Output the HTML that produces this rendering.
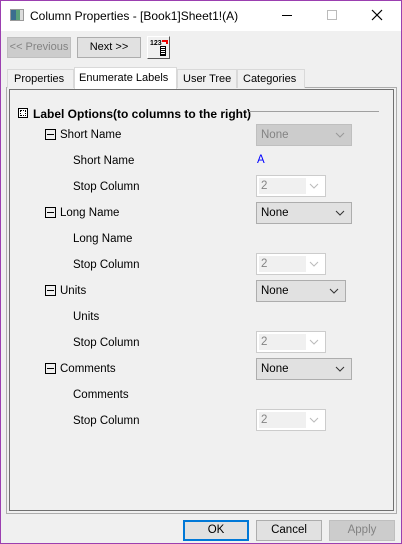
<!DOCTYPE html>
<html><head><style>
*{box-sizing:border-box;margin:0;padding:0}
body{width:402px;height:544px;overflow:hidden;background:#f0f0f0;font-family:"Liberation Sans",sans-serif;font-size:11.5px;color:#000;position:relative}
.a{position:absolute;white-space:nowrap}
.t{margin-top:2px}
.win{position:absolute;left:0;top:0;width:402px;height:544px;border:1px solid #9b3fb0;pointer-events:none}
.btn{position:absolute;white-space:nowrap;background:#e1e1e1;border:1px solid #adadad;text-align:center;line-height:19px}
.tab{position:absolute;white-space:nowrap;top:69px;height:19px;border:1px solid #d9d9d9;border-bottom:none;background:#f0f0f0;line-height:18px;padding-left:6px;font-size:11px}
.box{position:absolute;width:11px;height:11px;border:1px solid #000}
.box:after{content:"";position:absolute;left:1px;top:4px;width:7px;height:1px;background:#000}
.cb{position:absolute;white-space:nowrap;height:22px;line-height:21px;padding-left:4px}
.chev{position:absolute;right:6px;top:5px;width:10px;height:10px}
</style></head><body>
<div class="a" style="left:0;top:0;width:402px;height:31px;background:#fff"></div>
<div class="a" style="left:10px;top:9px;width:14px;height:12px;border:1px solid #999;background:linear-gradient(90deg,#3b6e8f 0 5px,#5aa07a 5px 9px,#ddd 9px)"></div>
<div class="a" style="left:30px;top:9px;font-size:12px">Column Properties - [Book1]Sheet1!(A)</div>
<div class="a" style="left:282px;top:15px;width:10px;height:1px;background:#000"></div>
<div class="a" style="left:327px;top:10px;width:10px;height:10px;border:1px solid #bbb"></div>
<svg class="a" style="left:371px;top:9px" width="12" height="12"><path d="M1 1L11 11M11 1L1 11" stroke="#000" stroke-width="1.2"/></svg>

<div class="btn" style="left:7px;top:37px;width:64px;height:21px;background:#ccc;border-color:#bfbfbf;color:#838383;font-size:11px">&lt;&lt; Previous</div>
<div class="btn" style="left:77px;top:37px;width:64px;height:21px;font-size:11px">Next &gt;&gt;</div>
<div class="a" style="left:147px;top:36px;width:23px;height:23px;background:#f0f0f0;border:1px solid #fff;border-right-color:#555;border-bottom-color:#555"></div>
<div class="a" style="left:150px;top:40px;font-size:7px;font-weight:bold">123</div>
<div class="a" style="left:162px;top:40px;width:6px;height:4px;border-top:2px solid #e00;border-right:2px solid #e00"></div>
<div class="a" style="left:160px;top:46px;width:6px;height:10px;border:1px solid #000;background:repeating-linear-gradient(#fff 0 1px,#000 1px 2px)"></div>

<div class="a" style="left:6px;top:87px;width:391px;height:427px;border:1px solid #adadad"></div>
<div class="a" style="left:9px;top:89px;width:385px;height:422px;border:1px solid #707070"></div>
<div class="tab" style="left:7px;width:67px">Properties</div>
<div class="tab" style="left:74px;top:67px;height:22px;width:103px;background:#fff;line-height:21px;padding-left:4px">Enumerate Labels</div>
<div class="tab" style="left:177px;width:60px;padding-left:5px">User Tree</div>
<div class="tab" style="left:237px;width:68px;padding-left:5px">Categories</div>

<div class="a" style="left:18px;top:108px;width:10px;height:10px;border:1px solid #000;background:#fff"></div>
<div class="a" style="left:20px;top:110px;width:6px;height:6px;background:#fff;border:1px dotted #000"></div>
<div class="a" style="left:33px;top:107px;font-weight:bold;font-size:12px;letter-spacing:0px">Label Options(to columns to the right)</div>
<div class="a" style="left:249px;top:111px;width:130px;height:1px;background:#a0a0a0"></div>

<div class="box" style="left:45px;top:129px"></div>
<div class="a" style="left:60px;top:129px">Short Name</div>
<div class="cb" style="left:256px;top:124px;width:96px;background:#ccc;border:1px solid #bfbfbf;color:#838383">None<svg class="chev" viewBox="0 0 10 10"><path d="M1 3l4 4 4-4" fill="none" stroke="#999"/></svg></div>
<div class="a" style="left:73px;top:155px">Short Name</div>
<div class="a" style="left:257px;top:154px;color:#00f">A</div>

<div class="a" style="left:73px;top:181px">Stop Column</div>
<div class="cb" style="left:256px;top:175px;width:70px;background:#fff;border:1px solid #ccc;color:#838383"><div class="a" style="left:2px;top:2px;width:47px;height:16px;background:#f0f0f0"></div><span style="position:relative">2</span><svg class="chev" viewBox="0 0 10 10"><path d="M1 3l4 4 4-4" fill="none" stroke="#bbb"/></svg></div>

<div class="box" style="left:45px;top:207px"></div>
<div class="a" style="left:60px;top:207px">Long Name</div>
<div class="cb" style="left:256px;top:202px;width:96px;background:#e1e1e1;border:1px solid #adadad">None<svg class="chev" viewBox="0 0 10 10"><path d="M1 3l4 4 4-4" fill="none" stroke="#333"/></svg></div>
<div class="a" style="left:73px;top:233px">Long Name</div>
<div class="a" style="left:73px;top:259px">Stop Column</div>
<div class="cb" style="left:256px;top:253px;width:70px;background:#fff;border:1px solid #ccc;color:#838383"><div class="a" style="left:2px;top:2px;width:47px;height:16px;background:#f0f0f0"></div><span style="position:relative">2</span><svg class="chev" viewBox="0 0 10 10"><path d="M1 3l4 4 4-4" fill="none" stroke="#bbb"/></svg></div>

<div class="box" style="left:45px;top:285px"></div>
<div class="a" style="left:60px;top:285px">Units</div>
<div class="cb" style="left:256px;top:280px;width:90px;background:#e1e1e1;border:1px solid #adadad">None<svg class="chev" viewBox="0 0 10 10"><path d="M1 3l4 4 4-4" fill="none" stroke="#333"/></svg></div>
<div class="a" style="left:73px;top:311px">Units</div>
<div class="a" style="left:73px;top:337px">Stop Column</div>
<div class="cb" style="left:256px;top:331px;width:70px;background:#fff;border:1px solid #ccc;color:#838383"><div class="a" style="left:2px;top:2px;width:47px;height:16px;background:#f0f0f0"></div><span style="position:relative">2</span><svg class="chev" viewBox="0 0 10 10"><path d="M1 3l4 4 4-4" fill="none" stroke="#bbb"/></svg></div>

<div class="box" style="left:45px;top:363px"></div>
<div class="a" style="left:60px;top:363px">Comments</div>
<div class="cb" style="left:256px;top:358px;width:96px;background:#e1e1e1;border:1px solid #adadad">None<svg class="chev" viewBox="0 0 10 10"><path d="M1 3l4 4 4-4" fill="none" stroke="#333"/></svg></div>
<div class="a" style="left:73px;top:389px">Comments</div>
<div class="a" style="left:73px;top:415px">Stop Column</div>
<div class="cb" style="left:256px;top:409px;width:70px;background:#fff;border:1px solid #ccc;color:#838383"><div class="a" style="left:2px;top:2px;width:47px;height:16px;background:#f0f0f0"></div><span style="position:relative">2</span><svg class="chev" viewBox="0 0 10 10"><path d="M1 3l4 4 4-4" fill="none" stroke="#bbb"/></svg></div>

<div class="btn" style="left:183px;top:520px;width:66px;height:21px;border:2px solid #0078d7;line-height:17px">OK</div>
<div class="btn" style="left:256px;top:520px;width:66px;height:21px">Cancel</div>
<div class="btn" style="left:329px;top:520px;width:66px;height:21px;background:#ccc;border-color:#bfbfbf;color:#838383">Apply</div>
<div class="win"></div>
</body></html>
